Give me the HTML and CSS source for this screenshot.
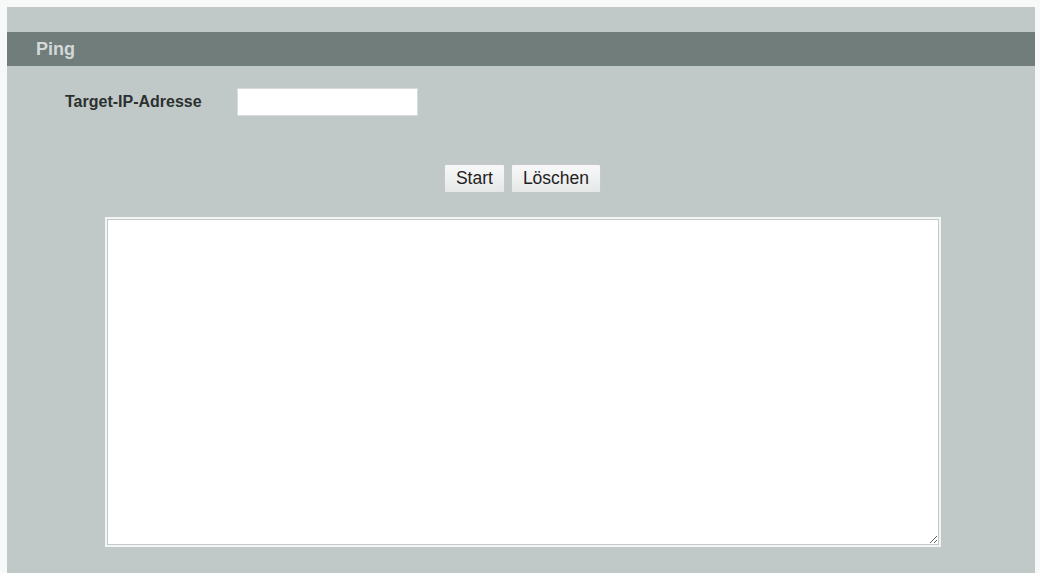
FILE: index.html
```html
<!DOCTYPE html>
<html lang="de">
<head>
  <meta charset="UTF-8" />
  <title>Ping</title>
  <link rel="stylesheet" href="styles.css">
</head>
<body>

  <div class="panel">
    <div class="panel-title">Ping</div>

    <!-- Zieladresse -->
    <div class="form-row">
      <label for="target-ip">Target-IP-Adresse</label>
      <input type="text" id="target-ip" />
    </div>

    <div class="buttons">
      <button>Start</button>
      <button>Löschen</button>
    </div>

    <!-- Ausgabe -->
    <textarea class="output" readonly></textarea>
  </div>

</body>
</html>
```

FILE: styles.css
```css
body {
  margin: 0;
  background: #f7f8f8;
  font-family: 'Liberation Sans', Arial, sans-serif;
  height: 100vh;
  overflow: hidden;
}

.panel {
  background: #c1c9c8;
  margin: 7px 5px 0 7px;
  padding-top: 25px;
  height: calc(100vh - 32px);
}

.panel-title {
  background: #707d7b;
  color: #d3d9d8;
  font-weight: bold;
  font-size: 18px;
  height: 34px;
  line-height: 34px;
  padding-left: 29px;
}

.form-row {
  display: flex;
  align-items: center;
  margin-top: 22px;
  padding-left: 58px;
}

.form-row label {
  width: 172px;
  font-size: 16px;
  font-weight: bold;
  color: #2b3030;
}

.form-row input {
  width: 181px;
  height: 28px;
  box-sizing: border-box;
  border: 1px solid #d6dcdb;
  background: #fff;
  padding: 2px 4px;
}

.buttons {
  display: flex;
  justify-content: center;
  gap: 6px;
  margin-top: 48px;
  padding-left: 3px;
}

.buttons button {
  font-family: 'Liberation Sans', Arial, sans-serif;
  font-size: 17.5px;
  color: #1f2222;
  height: 29px;
  padding: 0 11px;
  background: linear-gradient(#f8f8f8, #e6e8e8);
  border: 1px solid #c4c9c9;
  border-radius: 2px;
}

.output {
  display: block;
  width: 832px;
  height: 326px;
  box-sizing: border-box;
  margin: 26px 0 0 100px;
  border: 1px solid #c3cac9;
  box-shadow: 0 0 0 2px #f3f5f5;
  background: #fff;
}
```
